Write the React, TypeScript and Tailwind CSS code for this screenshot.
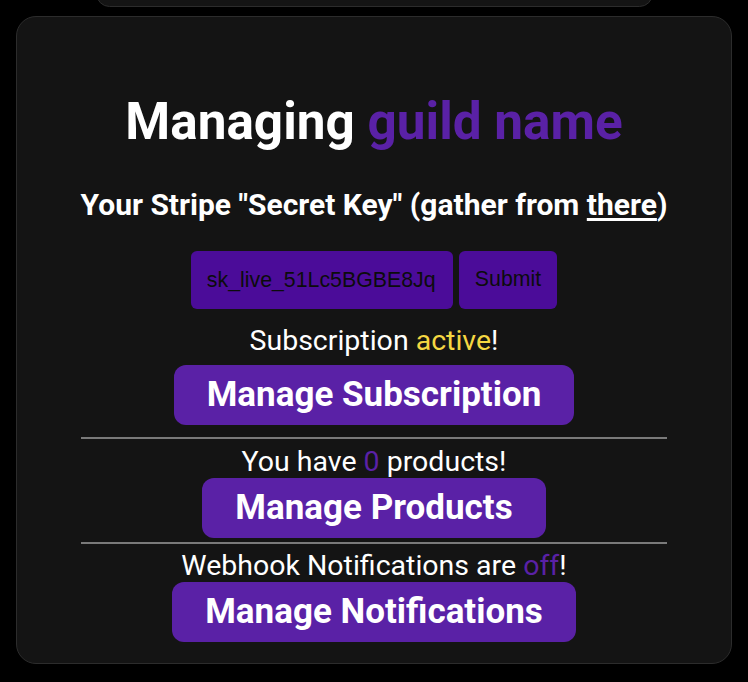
export default function App() {
  const roboto = { fontFamily: "Roboto, 'Noto Sans', sans-serif" };
  return (
    <div className="min-h-[682px] w-[748px] overflow-hidden bg-black" style={roboto}>
      {/* card above, scrolled out of view */}
      <div className="mx-auto -mt-[20px] h-[27px] w-[557px] rounded-[20px] border border-[#2c2c2c] bg-[#141414]" />

      <div className="mx-[16px] mt-[9px] flex h-[648px] flex-col items-center rounded-[20px] border border-[#2c2c2c] bg-[#141414] px-[64px] text-white">
        <h1 className="mt-[77px] whitespace-nowrap text-[51.3px] font-bold leading-[56px]">
          Managing <span className="text-[#5a21a6]">guild name</span>
        </h1>

        <h3 className="mt-[41px] whitespace-nowrap text-[30px] font-bold leading-[28px]">
          Your Stripe "Secret Key" (gather from <span className="underline underline-offset-[3px]">there</span>)
        </h3>

        <div className="mt-[32px] flex gap-[6px]">
          <input
            readOnly
            value="sk_live_51Lc5BGBE8Jq"
            className="h-[58px] w-[262px] rounded-[6px] bg-[#4b0c99] px-[16px] text-[21.33px] text-[#0c0c0c] outline-none"
            style={{ fontFamily: "'Liberation Sans', Arial, sans-serif" }}
          />
          <button
            className="h-[58px] rounded-[6px] bg-[#4b0c99] px-[16px] text-[21.33px] text-[#0c0c0c]"
            style={{ fontFamily: "'Liberation Sans', Arial, sans-serif" }}
          >
            Submit
          </button>
        </div>

        <p className="mt-[18px] whitespace-nowrap text-[28.5px] leading-[28px]">
          Subscription <span className="text-[#f5d742]">active</span>!
        </p>
        <button className="mt-[10px] h-[60px] whitespace-nowrap rounded-[12px] bg-[#5a21a6] px-[33px] text-[35px] font-bold text-white">
          Manage Subscription
        </button>

        <hr className="mt-[12px] w-full border-t-2 border-[#7a7a7a]" />

        <p className="mt-[9px] whitespace-nowrap text-[28.5px] leading-[28px]">
          You have <span className="text-[#5a21a6]">0</span> products!
        </p>
        <button className="mt-[2px] h-[60px] whitespace-nowrap rounded-[12px] bg-[#5a21a6] px-[33px] text-[35px] font-bold text-white">
          Manage Products
        </button>

        <hr className="mt-[4px] w-full border-t-2 border-[#7a7a7a]" />

        <p className="mt-[8px] whitespace-nowrap text-[28.5px] leading-[28px]">
          Webhook Notifications are <span className="text-[#5a21a6]">off</span>!
        </p>
        <button className="mt-[2px] h-[60px] whitespace-nowrap rounded-[12px] bg-[#5a21a6] px-[33px] text-[35px] font-bold text-white">
          Manage Notifications
        </button>
      </div>
    </div>
  );
}
